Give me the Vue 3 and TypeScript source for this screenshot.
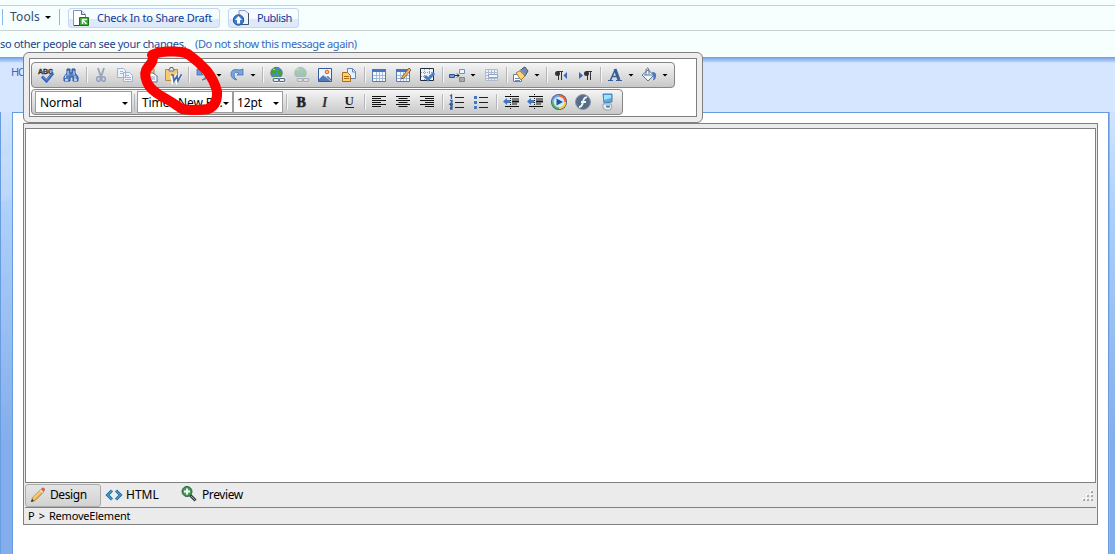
<script setup lang="ts">
interface Item { kind: 'icon' | 'sep' | 'arrow'; name?: string }

const parse = (spec: string): Item[] =>
  spec.split(' ').map((s) => (s === '|' ? { kind: 'sep' } : s === 'v' ? { kind: 'arrow' } : { kind: 'icon', name: s }))

const upper = parse('spell find | cut copy paste word | undo v redo v | link unlink image docs | table tedit tcheck | nodes v cells | brush v | ltr rtl | color v fill v')
const lower = parse('| bold italic underline | left center right | ol ul | outdent indent media flash device')

const art: Record<string, string> = {
  spell: '<text x="-1" y="6.500" font-size="7.500" font-weight="bold" textLength="15" lengthAdjust="spacingAndGlyphs" fill="#333" stroke="#333" stroke-width=".4" font-family="Liberation Sans">ABC</text><path d="M1 4.500h13" stroke="#666" stroke-width=".6"/><path d="M3 9.500l4.500 4.500 6.500-8" fill="none" stroke="#3567b8" stroke-width="3"/><path d="M4 10l3.500 3 5-6" fill="none" stroke="#78a0df" stroke-width=".8"/>',
  find: '<path d="M4 2h3v4h2V2h3v4l3 4v4h-5v-4H7v4H1v-4l3-4z" fill="#5583c7" stroke="#2b5297"/><path d="M3 8l-1 3M5 4v4M11 4v4M12 9v4" stroke="#d2e3fa"/><path d="M2 13h3M11 13h3" stroke="#b7d2f5" stroke-width="2"/>',
  cut: '<path d="M5 1l2 6 2 3M11 1L9 7l-2 3" fill="none" stroke="#9ba3ae" stroke-width="1.800"/><g fill="none" stroke="#94a3c4" stroke-width="1.600"><ellipse cx="5.500" cy="12" rx="1.800" ry="2.300"/><ellipse cx="10.500" cy="12" rx="1.800" ry="2.300"/></g>',
  copy: '<g fill="#edf3fb" stroke="#9fb5d8"><path d="M.5 1.500h6l2 2v7h-8zM6.500 5.500h6l3 3v6h-9z"/><path d="M3 4.500h3M3 6.500h3M8 8.500h4M8 10.500h6M8 12.500h6"/></g>',
  paste: '<path d="M2 2h11v12H2z" fill="#f4c76d" stroke="#aa8342"/><path d="M5 1h5v3H5z" fill="#dce4ef" stroke="#71717b"/><path d="M7 6h5l4 3v6H7z" fill="#fff" stroke="#59719b"/><path d="M9 10h5M9 12h5" stroke="#7899ca"/>',
  word: '<path d="M.5 2.500h12v11H.5z" fill="#f5ca73" stroke="#bc8c45"/><path d="M4 4V2h1V.5h3V2h1v2z" fill="#dce4ef" stroke="#71717b"/><path d="M7 8l1 6 3-4 1 4 4-6" fill="none" stroke="#fff" stroke-width="3.500"/><path d="M6 8h2l1 6 3-5 1 5 3-6h1" fill="none" stroke="#426cac" stroke-width="1.700"/>',
  undo: '<path d="M2 2v6h6L6 6q5-2 5 2 0 3-4 5 7-1 7-6 0-6-9-4z" fill="#6c99d7" stroke="#416eb5" stroke-width=".8"/>',
  redo: '<path d="M14 2v6H8l2-2Q5 4 5 8q0 3 3 5-6-1-6-6 0-6 9-4z" fill="#79a6df" stroke="#416eb5" stroke-width=".8"/>',
  link: '<circle cx="7.500" cy="6" r="5.700" fill="#4d88d4" stroke="#577385"/><path d="M3 2l3-1 2 2-1 3-3 2-2-3zM9 2l4 3-1 5-3-3zM4 9l4-1 2 3-4 1z" fill="#40a535"/><path d="M4 2l2 1" stroke="#b8f07b"/><g fill="none" stroke="#eee" stroke-width="3"><rect x="4" y="11.500" width="6" height="3" rx="1.500"/><rect x="10" y="11.500" width="6" height="3" rx="1.500"/></g><g fill="none" stroke="#4d6685" stroke-width="1.200"><rect x="4" y="11.500" width="6" height="3" rx="1.500"/><rect x="10" y="11.500" width="6" height="3" rx="1.500"/></g>',
  image: '<path d="M1.500 1.500h13v13h-13z" fill="#eff6ff" stroke="#345c99"/><path d="M2 12l4-4 3 2 2-1 3 3v2H2z" fill="#4f7ab6"/><path d="M2 12l4-4 3 2 5 4" fill="none" stroke="#b5cde8"/><circle cx="10" cy="5" r="1.800" fill="#ffc477" stroke="#dd5e32"/>',
  docs: '<path d="M6.500 1.500h5l3 3v7h-8z" fill="#e6f0ff" stroke="#6585b5"/><path d="M11.500 2v3h3" fill="none" stroke="#6585b5"/><path d="M1.500 5.500h5l3 3v6h-8z" fill="#ffd463" stroke="#a66d22"/><path d="M3 9.500h5M3 11.500h5" stroke="#a86b20"/>',
  table: '<path d="M1.500 2.500h13v12h-13z" fill="#f6faff" stroke="#547cae"/><path d="M1 2h14v3H1z" fill="#4676c8"/><path d="M2 8.500h12M2 11.500h12M5.500 5v9M8.500 5v9M11.500 5v9" stroke="#a2b9d8"/>',
  tcheck: '<path d="M1.500 1.500h13v12h-13z" fill="#eef3f9" stroke="#252c35"/><path d="M5.500 2v11M10.500 2v11M2 5.500h12M2 9.500h12" stroke="#8d9aa8" stroke-dasharray="1 1"/><path d="M6 9l3 3.500 6-6.500" fill="none" stroke="#477fca" stroke-width="3"/>',
  nodes: '<path d="M.5 7.500h5v3h-5z" fill="#6b9be0" stroke="#35578d"/><path d="M6 8.500h4M8 6.500l2 2-2 2" fill="none" stroke="#222"/><path d="M10.500 2.500h5v4h-5z" fill="#edf5ff" stroke="#7792b9"/><path d="M10.500 10.500h5v4h-5z" fill="#ababab" stroke="#7e8791"/>',
  cells: '<path d="M2.500 2.500h12v11h-12zM2 5.500h12M2 8.500h12M2 11.500h12M5.500 2v12M8.500 2v12M11.500 2v12" fill="#edf1f7" stroke="#aebbcf"/><path d="M5.500 7.500h9v3h-9z" fill="#eff8ff" stroke="#8ba6ce"/>',
  brush: '<path d="M.5 7.500h8v7h-8z" fill="#fff" stroke="#5c7eb0"/><path d="M2 11.500h5M2 13.500h5" stroke="#6790cb"/><path d="M3 6l5-3 4 6-4 4z" fill="#ffd76e" stroke="#a77c35"/><path d="M10 1l2-1 3 4-3 5-5-5z" fill="#758bae" stroke="#4b5367"/><path d="M7 3l5 5" stroke="#8b98ab" stroke-width="2"/>',
  ltr: '<path d="M5.500 4v9M8.500 4v9M4 4.500h6" stroke="#333"/><circle cx="4.500" cy="6.500" r="2.500" fill="#333"/><path d="M14 5v7l-3.500-3.500z" fill="#3469bd"/>',
  rtl: '<path d="M10.500 4v9M13.500 4v9M9 4.500h6" stroke="#333"/><circle cx="9.500" cy="6.500" r="2.500" fill="#333"/><path d="M2 5v7l4-3.500z" fill="#3469bd"/>',
  color: '<path d="M8 3L3.500 13M5 9.500h6" fill="none" stroke="#355f9c" stroke-width="1.600"/><path d="M8 2l4 11" stroke="#355f9c" stroke-width="3"/><path d="M1 13.500h5M9 13.500h6" stroke="#355f9c"/>',
  fill: '<path d="M7 3l6 5-6 6-6-6z" fill="#edf5fc" stroke="#5e7695"/><path d="M5 8V3q2-4 3 0v4M3 8h9" fill="none" stroke="#5b7495"/><path d="M11 5q5 0 4 5-1 4-3 3 1-2 0-5z" fill="#4778c1"/>',
  bold: '<text x="3.500" y="12.500" font-size="14" font-weight="900" stroke="#222" stroke-width=".6" fill="#222" font-family="Liberation Serif">B</text>',
  italic: '<text x="5" y="12.500" font-size="14" font-weight="bold" font-style="italic" fill="#333" font-family="Liberation Serif">I</text>',
  underline: '<text x="3.500" y="11" font-size="13" font-weight="bold" fill="#222" font-family="Liberation Serif">U</text><path d="M4 13.500h9" stroke="#222"/>',
  left: '<path d="M1 2.500h14M1 4.500h9M1 6.500h14M1 8.500h9M1 10.500h14M1 12.500h9" stroke="#111"/>',
  center: '<path d="M1 2.500h14M3.500 4.500h9M1 6.500h14M3.500 8.500h9M1 10.500h14M3.500 12.500h9" stroke="#111"/>',
  right: '<path d="M1 2.500h14M6 4.500h9M1 6.500h14M6 8.500h9M1 10.500h14M6 12.500h9" stroke="#111"/>',
  ol: '<path d="M6 3.500h9M6 8.500h9M6 13.500h9" stroke="#222"/><path d="M1 2l1.500-1v4M1 6.500h2v1.500L1 10h3M1 11.500h2v3.500H1M1 13.500h2" fill="none" stroke="#355f9c" stroke-width="1.300"/>',
  ul: '<path d="M6 3.500h9M6 8.500h9M6 13.500h9" stroke="#222"/><path d="M1 2h3v3H1zM1 7h3v3H1zM1 12h3v3H1z" fill="#4777bd"/>',
  outdent: '<path d="M2 2.500h14M9 5h7M9 10h5M2 12.500h14" stroke="#111"/><path d="M9 7.500h7" stroke="#111" stroke-width="2"/><path d="M7.500 0v16" stroke="#111" stroke-dasharray="1 1"/><path d="M0 7.500l4-3.500v2h3v3H4v2z" fill="#3d78c4"/>',
  indent: '<path d="M2 2.500h14M9 5h7M9 10h5M2 12.500h14" stroke="#111"/><path d="M9 7.500h7" stroke="#111" stroke-width="2"/><path d="M7.500 0v16" stroke="#111" stroke-dasharray="1 1"/><path d="M0 7.500l4-3.500v2h3v3H4v2z" fill="#3d78c4"/>',
  media: '<circle cx="8" cy="8" r="8" fill="#4c5370"/><g fill="none" stroke-width="2.500"><path d="M2 8a6 6 0 0 1 6-6" stroke="#72a6e8"/><path d="M8 2a6 6 0 0 1 6 6" stroke="#f16a31"/><path d="M14 8a6 6 0 0 1-6 6" stroke="#f2cf40"/><path d="M8 14a6 6 0 0 1-6-6" stroke="#53b75f"/></g><circle cx="8" cy="8" r="5.300" fill="#d4e9ff"/><path d="M5.500 4.500v7L12 8z" fill="#2354a0"/>',
  flash: '<circle cx="8" cy="8" r="7.500" fill="#566c89" stroke="#8a96a5"/><path d="M12 3.500Q9 3 8 8t-4 5M6 8h5" fill="none" stroke="#f3f7fb" stroke-width="1.800"/>',
  device: '<path d="M4 0h9v8l-8 1z" fill="#51aee8" stroke="#527caf"/><path d="M5 1h7v3L5 6z" fill="#a1e0ff"/><path d="M4 10h8l1 3-2 3H7l-3-2z" fill="#e9f1f5" stroke="#91a0ab"/><path d="M7 12.500h4" stroke="#527ca5" stroke-width="2"/>',
}
art.unlink = `<g opacity=".38">${art.link}</g>`
art.tedit = art.table + '<path d="M7 10l7-9 2 2-7 8-3 1z" fill="#efb75b" stroke="#71502d" stroke-width=".8"/>'
</script>

<template>
  <div class="window">
    <div class="actions">
      <i class="bar first"></i>
      <span class="tools">Tools</span><i class="caret"></i><i class="bar second"></i>
      <div class="action check">
        <svg width="18" height="18" viewBox="0 0 18 18"><path d="M1.500 1.500h8l4 4v11h-12z" fill="#fff" stroke="#8592ad"/><path d="M9.500 1.500v4h4" fill="#dbe5f5" stroke="#586782"/><path d="M2 16.500h7" stroke="#263e69"/><path d="M7.500 8.500h9v8h-9z" fill="#3ca536" stroke="#187125"/><path d="M14.500 15L10.500 11M10.500 15v-4.500H15" fill="none" stroke="#fff" stroke-width="1.500"/></svg>
        <span class="t-check">Check In to Share Draft</span>
      </div>
      <div class="action publish">
        <svg width="18" height="18" viewBox="0 0 18 18"><path d="M7 1.500h6l3.500 3v11H7z" fill="#eef3fc" stroke="#8d9cb6"/><path d="M16.500 4v11.500H9" fill="none" stroke="#40506e"/><circle cx="6.500" cy="11" r="5.200" fill="#417dce" stroke="#254e96"/><path d="M6.500 7L3 11h2v3.500h3V11h2z" fill="#fff"/></svg>
        <span class="t-publish">Publish</span>
      </div>
    </div>
    <div class="notice"><span class="msg">so other people can see your changes.</span><span class="dismiss">(Do not show this message again)</span></div>
    <div class="band"><span>HO</span></div>
    <div class="body">
      <div class="gutter lg"><svg width="12" height="216" viewBox="0 0 12 216"><path d="M0 46L12 39v42L0 89z" fill="#d2e5fd" opacity=".25"/><path d="M0 89l12-6" stroke="#cfe3fb" opacity=".6"/></svg></div>
      <div class="page">
        <div class="editor">
          <div class="canvas"></div>
          <div class="modes">
            <div class="tab active">
              <svg width="16" height="16" viewBox="0 0 16 16"><path d="M1.500 14.500l1-3.500L11 2.500 13.500 5 5 13.500z" fill="#f6bd50" stroke="#a77b34"/><path d="M3.500 11l8-8" stroke="#ffe59a"/><path d="M1 15l1-3 2 2z" fill="#333"/><path d="M11 2l1.500-1.500q2.500 0 2.500 2.500L13.500 5z" fill="#d95b52"/><path d="M10.500 3l2.500 2.500" stroke="#dbe4e8" stroke-width="1.300"/></svg>
              <span class="t-design">Design</span>
            </div>
            <div class="tab html">
              <svg width="16" height="16" viewBox="0 0 16 16"><path d="M6 3.500L1.500 8 6 12.500M10 3.500L14.500 8 10 12.500" fill="none" stroke="#155d94" stroke-width="2.800"/><path d="M6 3.500L1.500 8 6 12.500M10 3.500L14.500 8 10 12.500" fill="none" stroke="#45a5db" stroke-width="1.100"/></svg>
              <span class="t-html">HTML</span>
            </div>
            <div class="tab preview">
              <svg width="16" height="16" viewBox="0 0 16 16"><path d="M9 8l5.500 5.500" stroke="#303c3c" stroke-width="3"/><path d="M10 9l4 4" stroke="#9aabad"/><circle cx="6" cy="4.500" r="5" fill="#459755" stroke="#28633b"/><path d="M6 1.500v6M3 4.500h6" stroke="#fff" stroke-width="2"/></svg>
              <span class="t-preview">Preview</span>
            </div>
            <svg class="grip" width="12" height="12" viewBox="0 0 12 12"><path d="M8 0h2v2H8zM4 4h2v2H4zM8 4h2v2H8zM0 8h2v2H0zM4 8h2v2H4zM8 8h2v2H8z" fill="#fff"/><path d="M9 1h2v2H9zM5 5h2v2H5zM9 5h2v2H9zM1 9h2v2H1zM5 9h2v2H5zM9 9h2v2H9z" fill="#aaa"/></svg>
          </div>
          <div class="crumbs"><span class="p">P</span><span class="gt">&gt;</span><span class="t-remove">RemoveElement</span></div>
        </div>
      </div>
      <div class="gutter rg"></div>
    </div>

    <div class="palette">
      <div class="inner">
        <div class="strip one">
          <template v-for="(it, i) in upper" :key="i">
            <i v-if="it.kind === 'sep'" class="sep"></i>
            <i v-else-if="it.kind === 'arrow'" class="drop"></i>
            <svg v-else :class="['icon', it.name]" viewBox="0 0 16 16" v-html="art[it.name!]"></svg>
          </template>
        </div>
        <div class="strip two">
          <div class="combo style"><span>Normal</span><i class="caret"></i></div>
          <i class="split"></i>
          <div class="combo face"><span>Times New R...</span><i class="caret"></i></div>
          <div class="combo size"><span>12pt</span><i class="caret"></i></div>
          <template v-for="(it, i) in lower" :key="i">
            <i v-if="it.kind === 'sep'" class="sep"></i>
            <svg v-else :class="['icon', it.name]" viewBox="0 0 16 16" v-html="art[it.name!]"></svg>
          </template>
        </div>
      </div>
    </div>
    <svg class="mark" width="90" height="76" viewBox="136 43 90 76"><path d="M152 55Q160 51 171 51.500Q182 51 188 54Q199 62 207 71Q214 80 217 91Q218 105 208 109Q195 111 182 109Q172 102 163 97Q150 90 147 82Q143 73 148 67Q154 61 153 55" fill="none" stroke="#f00" stroke-width="10" stroke-linecap="round" stroke-linejoin="round"/></svg>
  </div>
</template>

<style>
html, body { margin: 0; overflow: hidden; }
</style>
<style scoped>
* { box-sizing: border-box; }
.window { position: relative; width: 1115px; height: 554px; overflow: hidden; background: #f6fffe; font-family: "Noto Sans", "Open Sans", sans-serif; font-size: 11px; line-height: 16px; white-space: nowrap; color: #000; }
svg { display: block; flex: none; overflow: visible; }
i { display: block; flex: none; }
.actions { display: flex; align-items: center; height: 31px; padding-top: 4px; border-bottom: 1px solid #ccd1d3; background: linear-gradient(#f6fffe 5px, #ccd1d3 5px 6px, #f6fffe 6px); }
.bar { width: 1px; height: 16px; background: #8ab6e9; }
.first { margin-left: 2px; }
.tools { width: 35px; margin-left: 7px; color: #344b70; font-size: 12px; letter-spacing: .15px; }
.caret { width: 0; height: 0; border: 3px solid transparent; border-top-color: #000; border-bottom: 0; }
.second { margin-left: 8px; }
.action { display: flex; align-items: center; height: 20px; margin-top: 2px; border: 1px solid #c4d6f1; border-radius: 3px; background: linear-gradient(#f7fcff 55%, #dee9fa 55%); color: #093b9c; }
.check { width: 152px; margin-left: 8px; padding-left: 3px; }
.check span { margin-left: 7px; letter-spacing: -.2px; }
.publish { width: 71px; margin-left: 8px; padding-left: 3px; }
.publish span { margin-left: 7px; letter-spacing: -.45px; }
.notice { display: flex; align-items: center; height: 26px; color: #26428c; }
.msg { width: 195px; letter-spacing: -.33px; }
.dismiss { color: #3967c4; letter-spacing: -.38px; }
.band { height: 55px; padding: 7px 0 0 11px; background: linear-gradient(#709ddd 0, #8db4ed 2px, #a9c8f4 4px, #d5e6fe 6px); color: #3467cf; letter-spacing: -1.200px; }
.body { display: flex; height: 442px; }
.gutter { background: linear-gradient(#d2e4fd, #add0fa 100px, #84aeeb 330px); }
.lg { width: 12px; border-left: 1px solid #699be0; }
.rg { flex: 1; border-left: 1px solid #8db6ec; }
.page { width: 1097px; padding: 10px 0 0 10px; background: #fff; border: solid #699be0; border-width: 1px 1px 0; }
.editor { width: 1075px; height: 402px; border: 1px solid #808080; background: #ebebeb; padding-top: 4px; }
.canvas { width: 1071px; height: 355px; margin-left: 1px; border: 1px solid #808080; background: #fff; }
.modes { display: flex; height: 25px; align-items: center; margin: 0 1px; border-bottom: 1px solid #808080; font-size: 12px; }
.tab { display: flex; height: 23px; align-items: center; }
.active { width: 76px; border: 1px solid #ababab; border-radius: 3px; background: linear-gradient(#e5e5e5, #d2d2d2); padding-left: 4px; }
.active span { margin-left: 4px; letter-spacing: -.4px; }
.html { width: 76px; padding-left: 5px; }
.html span { margin-left: 4px; }
.preview { padding-left: 4px; }
.preview span { margin-left: 5px; letter-spacing: -.4px; }
.grip { margin: 1px 2px 0 auto; }
.crumbs { display: flex; height: 16px; align-items: center; padding-left: 4px; }
.gt { margin-left: 4px; }
.t-remove { margin-left: 4px; letter-spacing: -.2px; }
.palette { position: absolute; left: 23px; top: 52px; width: 680px; height: 71px; padding: 5px; border: 1px solid #808080; border-radius: 6px; background: #ededed; }
.inner { width: 668px; height: 59px; padding: 3px 0 0 1px; border: 1px solid #808080; background: #fff; }
.strip { display: flex; align-items: center; height: 26px; border: 1px solid #858585; border-radius: 4px; background: linear-gradient(#f5f5f5, #c8c8c8); }
.one { width: 644px; padding-left: 3px; }
.two { width: 592px; padding-left: 3px; margin-top: 1px; }
.icon { width: 16px; height: 16px; margin: 0 4px; }
.sep { width: 6px; height: 16px; background: linear-gradient(90deg, transparent 3px, #b5b7ba 3px 4px, #f5f5f5 4px 5px, transparent 5px); }
.drop { width: 10px; height: 3px; background: #000; clip-path: polygon(1px 0, 7px 0, 4px 3px); }
.combo { display: flex; align-items: center; justify-content: space-between; height: 22px; padding: 2px 4px 0; border: 1px solid #9c9c9c; background: #fff; font-size: 12px; letter-spacing: -.1px; }
.style { width: 97px; padding-right: 3px; }
.split { width: 1px; height: 17px; margin: 0 2px; background: #b5b7ba; }
.face { width: 96px; padding-right: 3px; }
.size { width: 50px; padding-left: 3px; padding-right: 3px; }
.mark { position: absolute; left: 136px; top: 43px; }
</style>
